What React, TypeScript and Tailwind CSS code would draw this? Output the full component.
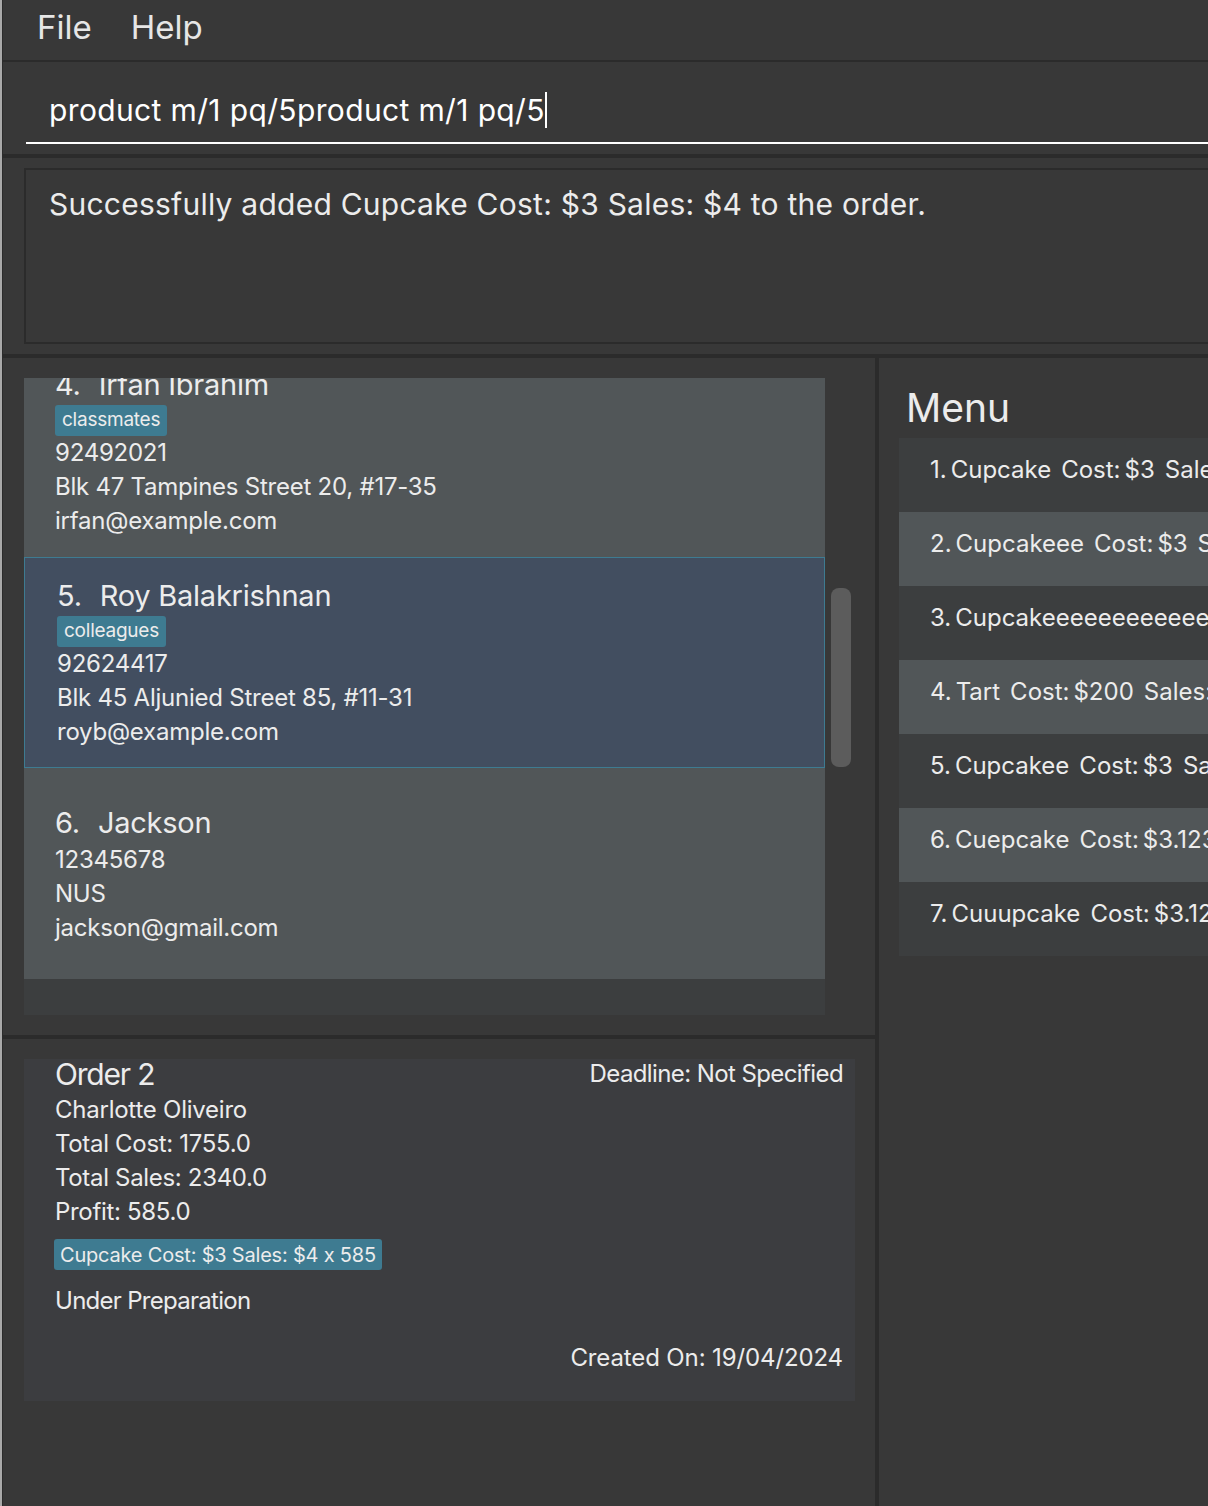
import React from 'react';

const persons = [
  {
    id: 4,
    name: 'Irfan Ibrahim',
    tag: 'classmates',
    phone: '92492021',
    address: 'Blk 47 Tampines Street 20, #17-35',
    email: 'irfan@example.com',
  },
  {
    id: 5,
    name: 'Roy Balakrishnan',
    tag: 'colleagues',
    phone: '92624417',
    address: 'Blk 45 Aljunied Street 85, #11-31',
    email: 'royb@example.com',
    selected: true,
  },
  {
    id: 6,
    name: 'Jackson',
    phone: '12345678',
    address: 'NUS',
    email: 'jackson@gmail.com',
  },
];

const menuItems = [
  { name: 'Cupcake', cost: '$3', sales: '$4' },
  { name: 'Cupcakeee', cost: '$3', sales: '$4' },
  { name: 'Cupcakeeeeeeeeeeeeeeee', cost: '$3', sales: '$4' },
  { name: 'Tart', cost: '$200', sales: '$300' },
  { name: 'Cupcakee', cost: '$3', sales: '$4' },
  { name: 'Cuepcake', cost: '$3.1234', sales: '$4' },
  { name: 'Cuuupcake', cost: '$3.12', sales: '$4' },
];

type Person = (typeof persons)[number] & { selected?: boolean; tag?: string };

const PersonCard = ({ p }: { p: Person }) => (
  <div
    className={`h-[211px] shrink-0 flex flex-col justify-center border tracking-[-0.015em] ${
      p.selected ? 'pl-[32px] bg-[#424e60] border-[#3e7b91]' : 'pl-[30px] bg-[#515658] border-transparent'
    }`}
  >
    <div className="flex items-center h-[40px] text-[29px]">
      <span>{p.id}.</span>
      <span className="ml-[18px]">{p.name}</span>
    </div>
    {p.tag && (
      <div className="h-[31px] w-fit flex items-center px-[7px] rounded-[3px] bg-[#3e7b91] text-[19px]">
        {p.tag}
      </div>
    )}
    <div className="text-[24px] leading-[34px]">
      <div>{p.phone}</div>
      <div>{p.address}</div>
      <div>{p.email}</div>
    </div>
  </div>
);

export default function App() {
  return (
    <div className="w-[1208px] h-[1506px] overflow-hidden bg-[#383838] flex text-[#ececec] font-['Inter',sans-serif]">
      <div className="w-[2px] shrink-0 bg-[#a9a9a9]" />
      <div className="w-[1px] shrink-0 bg-[#2b2b2b]" />
      <div className="flex-1 min-w-0 flex flex-col">
        {/* menu bar */}
        <div className="h-[62px] shrink-0 flex items-center gap-[39px] pl-[34px] pb-[4px] text-[33px] text-[#e6e6e6] border-b-2 border-[#2b2b2b]">
          <span>File</span>
          <span>Help</span>
        </div>

        {/* command box */}
        <div className="h-[96px] shrink-0 pt-[16px] pl-[23px] border-b-4 border-[#2b2b2b]">
          <div className="h-[66px] flex items-center pl-[23px] border-b-2 border-white text-[30px] tracking-[0.012em] text-white">
            <span>product m/1 pq/5product m/1 pq/5</span>
            <span className="w-[2px] h-[36px] bg-white" />
          </div>
        </div>

        {/* result box */}
        <div className="h-[200px] shrink-0 pt-[10px] pb-[10px] pl-[21px] border-b-4 border-[#2b2b2b]">
          <div className="h-full border-2 border-r-0 border-[#2b2b2b] pl-[23px] pt-[12px] text-[30px] leading-[44px] tracking-[0.008em]">
            Successfully added Cupcake Cost: $3 Sales: $4 to the order.
          </div>
        </div>

        {/* lower */}
        <div className="flex-1 min-h-0 flex">
          <div className="w-[872px] shrink-0 flex flex-col">
            {/* person list */}
            <div className="h-[681px] shrink-0 pt-[20px] pb-[20px] pl-[21px] border-b-4 border-[#2b2b2b] flex">
              <div className="w-[801px] h-full overflow-hidden bg-[#3c3e3f] flex flex-col">
                <div className="mt-[-32px] flex flex-col">
                  {persons.map((p) => (
                    <PersonCard key={p.id} p={p as Person} />
                  ))}
                </div>
              </div>
              <div className="pt-[210px] pl-[6px]">
                <div className="w-[20px] h-[179px] rounded-[8px] bg-[#5c5c5c]" />
              </div>
            </div>

            {/* order */}
            <div className="flex-1 pt-[20px] pl-[21px]">
              <div className="w-[831px] h-[342px] bg-[#3c3d40] pl-[31px] pr-[12px] flex flex-col tracking-[-0.02em]">
                <div className="h-[30px] flex items-center justify-between">
                  <span className="text-[30px] tracking-[-0.04em]">Order 2</span>
                  <span className="text-[24px] tracking-[-0.025em]">Deadline: Not Specified</span>
                </div>
                <div className="mt-[4px] text-[24px] leading-[34px]">
                  <div className="tracking-[-0.01em]">Charlotte Oliveiro</div>
                  <div>Total Cost: 1755.0</div>
                  <div>Total Sales: 2340.0</div>
                  <div>Profit: 585.0</div>
                </div>
                <div className="mt-[10px] h-[31px] w-fit flex items-center px-[6px] rounded-[3px] bg-[#3e7b91] text-[20px] tracking-[-0.01em] ml-[-1px]">
                  Cupcake Cost: $3 Sales: $4 x 585
                </div>
                <div className="mt-[14px] text-[24px] leading-[34px] tracking-[-0.03em]">Under Preparation</div>
                <div className="mt-[23px] text-[24px] leading-[34px] text-right tracking-[-0.005em]">Created On: 19/04/2024</div>
              </div>
            </div>
          </div>

          <div className="w-[4px] shrink-0 bg-[#2b2b2b]" />

          {/* menu panel */}
          <div className="flex-1 min-w-0 pt-[26px]">
            <div className="pl-[27px] text-[39px] leading-[48px]">Menu</div>
            <div className="mt-[6px] ml-[20px] flex flex-col">
              {menuItems.map((m, i) => (
                <div
                  key={i}
                  className={`h-[74px] pt-[19px] pl-[31px] whitespace-nowrap text-[24px] leading-[26px] ${
                    i % 2 === 0 ? 'bg-[#3c3e3f]' : 'bg-[#515658]'
                  }`}
                >
                  <span>{i + 1}.</span>
                  <span className="ml-[4px]">{m.name}</span>
                  <span className="ml-[10px]">Cost:</span>
                  <span className="ml-[4px]">{m.cost}</span>
                  <span className="ml-[10px]">Sales: {m.sales}</span>
                </div>
              ))}
            </div>
          </div>
        </div>
      </div>
    </div>
  );
}
